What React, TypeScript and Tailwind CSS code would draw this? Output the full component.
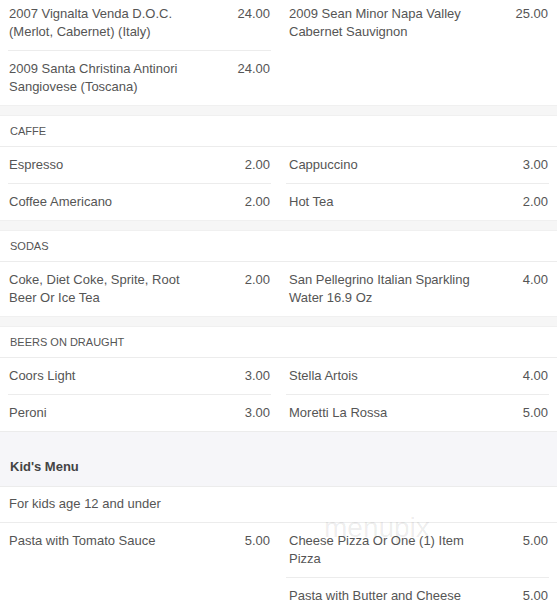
type Item = { name: string; price: string }

type Section = {
    title: string
    left: Item[]
    right: Item[]
}

const WINES: Section = {
    title: '',
    left: [
        { name: '2007 Vignalta Venda D.O.C. (Merlot, Cabernet) (Italy)', price: '24.00' },
        { name: '2009 Santa Christina Antinori Sangiovese (Toscana)', price: '24.00' },
    ],
    right: [{ name: '2009 Sean Minor Napa Valley Cabernet Sauvignon', price: '25.00' }],
}

const SECTIONS: Section[] = [
    {
        title: 'Caffe',
        left: [
            { name: 'Espresso', price: '2.00' },
            { name: 'Coffee Americano', price: '2.00' },
        ],
        right: [
            { name: 'Cappuccino', price: '3.00' },
            { name: 'Hot Tea', price: '2.00' },
        ],
    },
    {
        title: 'Sodas',
        left: [{ name: 'Coke, Diet Coke, Sprite, Root Beer Or Ice Tea', price: '2.00' }],
        right: [{ name: 'San Pellegrino Italian Sparkling Water 16.9 Oz', price: '4.00' }],
    },
    {
        title: 'Beers on Draught',
        left: [
            { name: 'Coors Light', price: '3.00' },
            { name: 'Peroni', price: '3.00' },
        ],
        right: [
            { name: 'Stella Artois', price: '4.00' },
            { name: 'Moretti La Rossa', price: '5.00' },
        ],
    },
]

const KIDS: Section = {
    title: "Kid's Menu",
    left: [{ name: 'Pasta with Tomato Sauce', price: '5.00' }],
    right: [
        { name: 'Cheese Pizza Or One (1) Item Pizza', price: '5.00' },
        { name: 'Pasta with Butter and Cheese', price: '5.00' },
    ],
}

function MenuRow({ item, right }: { item: Item; right?: boolean }) {
    return (
        <div
            className={`flex justify-between gap-4 border-b border-[#ececec] py-[9px] leading-[18px] last:border-b-0 ${
                right ? 'pl-[3px]' : 'pl-[1px]'
            }`}
        >
            <span className="max-w-[185px]">{item.name}</span>
            <span className="pr-[1px]">{item.price}</span>
        </div>
    )
}

function Columns({ section }: { section: Section }) {
    return (
        <div className="grid grid-cols-2 gap-x-[15px] px-2">
            <div className="flex flex-col">
                {section.left.map((item) => (
                    <MenuRow key={item.name} item={item} />
                ))}
            </div>
            <div className="flex flex-col">
                {section.right.map((item) => (
                    <MenuRow key={item.name} item={item} right />
                ))}
            </div>
        </div>
    )
}

function Band() {
    return <div className="h-[11px] border-y border-[#f0f0f0] bg-[#f6f6f6]" />
}

export default function App() {
    return (
        <div className="h-[614px] w-full overflow-hidden bg-white font-['Liberation_Sans',Arial,sans-serif] text-[13px] text-[#555]">
            <div className="-mt-[4px]">
                <Columns section={WINES} />
                {SECTIONS.map((section) => (
                    <div key={section.title}>
                        <Band />
                        <div className="flex h-[31px] items-center border-b border-[#ececec] px-[10px] text-[11px] uppercase leading-none">
                            {section.title}
                        </div>
                        <Columns section={section} />
                    </div>
                ))}

                <div className="flex h-[56px] items-end border-y border-[#ececec] bg-[#f6f6f9] px-[10px] pb-[10px] font-bold leading-[18px] text-[#444]">
                    {KIDS.title}
                </div>
                <div className="relative">
                    <div className="h-[36px] border-b border-[#ececec] px-[9px] pt-[8px] leading-[18px]">
                        For kids age 12 and under
                    </div>
                    <Columns section={KIDS} />
                    <span className="pointer-events-none absolute left-[324px] top-[27px] text-[28px] leading-none text-black/[0.08]">
                        menupix
                    </span>
                </div>
            </div>
        </div>
    )
}
